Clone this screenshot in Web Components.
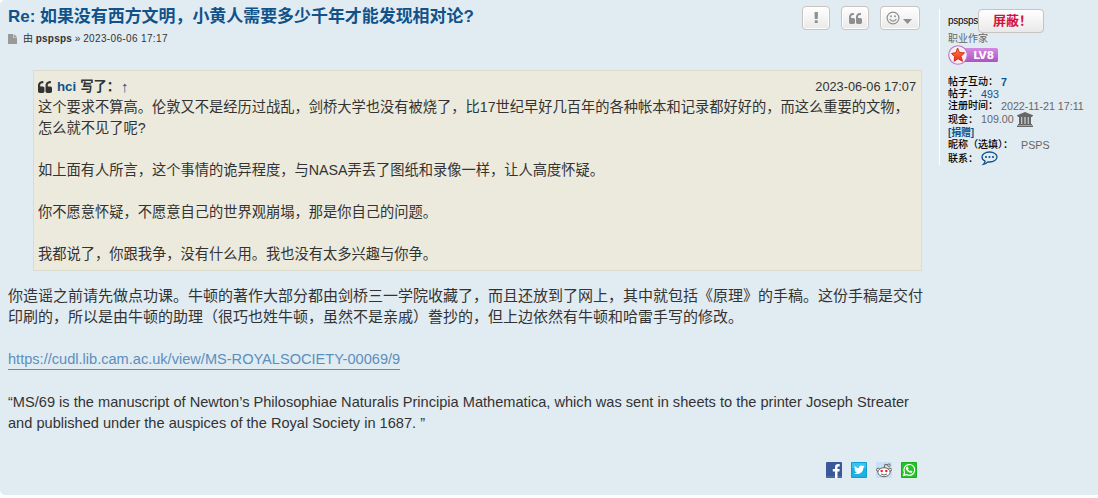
<!DOCTYPE html>
<html lang="zh-CN">
<head>
<meta charset="utf-8">
<title>如果没有西方文明</title>
<style>
  body {
    margin: 0; height: 498px; overflow: hidden; background: #fff; color: #333;
    font: 15px/21px "Liberation Sans", "Noto Sans CJK SC", sans-serif;
  }
  a { color: #105289; text-decoration: none; }
  p { margin: 0; }
</style>
</head>
<body>
<forum-post>
  <post-header slot="header" author="pspsps" time="2023-06-06 17:17">Re: 如果没有西方文明，小黄人需要多少千年才能发现相对论?</post-header>
  <quote-box author="hci" time="2023-06-06 17:07">
    <p>这个要求不算高。伦敦又不是经历过战乱，剑桥大学也没有被烧了，比17世纪早好几百年的各种帐本和记录都好好的，而这么重要的文物，<br>怎么就不见了呢?</p>
    <p>如上面有人所言，这个事情的诡异程度，与NASA弄丢了图纸和录像一样，让人高度怀疑。</p>
    <p>你不愿意怀疑，不愿意自己的世界观崩塌，那是你自己的问题。</p>
    <p>我都说了，你跟我争，没有什么用。我也没有太多兴趣与你争。</p>
  </quote-box>
  <post-text></post-text>
  <share-bar slot="share"></share-bar>
  <user-profile slot="profile"></user-profile>
</forum-post>

<script>
const ICONS = {
  quote: ['0 0 1664 1664', '<path d="M768 960v384q0 80-56 136t-136 56H192q-80 0-136-56T0 1344V640q0-104 40.500-198.500T150 278t163.500-109.500T512 128h64q26 0 45 19t19 45v128q0 26-19 45t-45 19h-64q-106 0-181 75t-75 181v32q0 40 28 68t68 28h224q80 0 136 56t56 136zm896 0v384q0 80-56 136t-136 56h-384q-80 0-136-56t-56-136V640q0-104 40.500-198.500T1046 278t163.500-109.500T1408 128h64q26 0 45 19t19 45v128q0 26-19 45t-45 19h-64q-106 0-181 75t-75 181v32q0 40 28 68t68 28h224q80 0 136 56t56 136z"/>'],
  alert: ['0 0 1792 1792', '<path d="M1120 1248v224q0 26-19 45t-45 19h-256q-26 0-45-19t-19-45v-224q0-26 19-45t45-19h256q26 0 45 19t19 45zm30-1056l-28 768q-1 26-20.500 45t-45.500 19h-256q-26 0-45.500-19t-20.500-45l-28-768q-1-26 17.500-45t44.500-19h320q26 0 44.500 19t17.500 45z"/>'],
  smile: ['0 0 14 14', '<g fill="none" stroke="currentColor" stroke-width="1.200"><circle cx="7" cy="7" r="5.900"/><path d="M4 8.300q3 3.600 6 0" stroke-linecap="round"/></g><circle cx="5" cy="5.200" r=".95"/><circle cx="9" cy="5.200" r=".95"/>'],
  caret: ['0 0 9 5', '<path d="M0 0h9L4.500 5z"/>'],
  file: ['0 0 9 10', '<path d="M.5 0H5v3.500h4v6q0 .5-.5.5h-8Q0 10 0 9.500v-9Q0 0 .5 0zM5.700 0 9 2.900H5.700z"/>'],
  bank: ['0 0 16 15', '<path d="M8 0l8 3.200v1H15v.8H1v-.8H0v-1zM2 5h2.300v7h.9V5h2.300v7h1V5h2.300v7h.9V5H14v7h1v1H1v-1h1zM0 13.500h16V15H0z"/>'],
  chat: ['0 0 17 15', '<path d="M8.500 1C4.300 1 1 3.200 1 6c0 1.800 1.200 3.200 3.100 4.100-.2 1.400-.8 2.400-1.700 3.300 2-.3 3.400-1.200 4.400-2.500l1.700.1c4.200 0 7.500-2.200 7.500-5S12.700 1 8.500 1z" fill="none" stroke="currentColor" stroke-width="1.300"/><circle cx="5" cy="6" r="1.050"/><circle cx="8.500" cy="6" r="1.050"/><circle cx="12" cy="6" r="1.050"/>'],
  facebook: ['0 0 16 16', '<rect width="16" height="16" rx="1" fill="#3b5998"/><path d="M0 14h16v1.500H0z" fill="#526ba5"/><path d="M9 16V9.500H6.800V7H9V5.200C9 2.900 10.300 2 12.100 2h1.600v2.400h-1.200c-.8 0-1 .4-1 1V7h2.200l-.3 2.500h-1.900V16z" fill="#fff"/>'],
  twitter: ['0 0 16 16', '<rect width="16" height="16" rx="1" fill="#0698cd"/><rect x=".7" y=".7" width="14.600" height="14.600" fill="#1cb0e4"/><path d="M1 1h14v5H1z" fill="#39c3ef"/><path d="M3 11.200c1.200.1 2.200-.2 3-.8-1-.1-1.700-.7-1.900-1.500h.9C4 8.600 3.400 7.800 3.400 6.700l.9.200C3.400 6.200 3.200 5 3.700 4c1.100 1.300 2.500 2 4.300 2.100-.3-1.600.8-2.700 2.200-2.700.7 0 1.200.3 1.600.7l1.400-.5-.9 1.200 1.200-.3-1.100 1.200c.1 4.500-4.900 8-9.400 5.500z" fill="#fff"/>'],
  reddit: ['0 0 16 16', '<rect width="16" height="16" fill="#c9dff5"/><g stroke="#555" stroke-width=".9"><path d="M8 6l1-3.800 3 .8" fill="none"/><circle cx="12.900" cy="3.200" r="1.250" fill="#fff"/><circle cx="2.200" cy="7.800" r="1.600" fill="#fff"/><circle cx="13.800" cy="7.800" r="1.600" fill="#fff"/><ellipse cx="8" cy="10.200" rx="6.100" ry="4.500" fill="#fff"/><path d="M5 12q3 2 6 0" fill="none"/></g><circle cx="5.700" cy="9" r="1.250" fill="#ee2b1b"/><circle cx="10.300" cy="9" r="1.250" fill="#ee2b1b"/>'],
  whatsapp: ['0 0 16 16', '<rect width="16" height="16" rx="1" fill="#18aa18"/><rect x=".7" y=".7" width="14.600" height="14.600" fill="#26c326"/><path d="M2.700 13.400l.8-3A5.400 5.400 0 1 1 5.600 12.600z" fill="none" stroke="#fff" stroke-width="1.200"/><path d="M5.800 4.800l1-.2.8 1.800-.6.8q.6 1.300 2 1.900l.8-.7 1.600.9c0 1.200-1 1.700-2 1.500-2.700-.5-4.500-2.500-4.600-4.500q.1-.9 1-1.500z" fill="#fff"/>'],
  level: ['0 0 50 20', '<defs><linearGradient id="p" x2="0" y2="1"><stop stop-color="#d38be0"/><stop offset="1" stop-color="#ae50c5"/></linearGradient><linearGradient id="s" x2="0" y2="1"><stop stop-color="#ff8852"/><stop offset="1" stop-color="#e92916"/></linearGradient></defs><rect x="12" y="3" width="38" height="14" rx="1.500" fill="url(#p)"/><circle cx="10" cy="10" r="9.300" fill="#f7edf3" stroke="#b579ca" stroke-width="1.100"/><path d="M9.500 3l2 4.600 5 .2-3.500 3.600 1.500 4.900-4.500-2.600-3.800 2.600.4-4.700L3.500 8.500l4.500-.9z" fill="url(#s)" stroke="#c9270e" stroke-width=".9"/>'],
};

function icon(name, width, height = width) {
  const [box, shapes] = ICONS[name];
  return `<svg class="${name}" width="${width}" height="${height}" viewBox="${box}" fill="currentColor" aria-hidden="true">${shapes}</svg>`;
}

class BaseElement extends HTMLElement {
  constructor() {
    super();
    this.attachShadow({ mode: 'open' });
  }
  connectedCallback() {
    this.shadowRoot.innerHTML = `<style>svg { display: block; flex: none; } a { color: #105289; text-decoration: none; }</style>${this.render()}`;
  }
}

customElements.define('forum-post', class extends BaseElement {
  render() {
    return `
      <style>
        :host { display: flex; box-sizing: border-box; height: 495px; padding: 6px 8px 17px; background: #e1ebf2; border-radius: 5px 0 0 5px; }
        main { display: flex; flex-direction: column; width: 914px; flex: none; }
        .share { margin-top: auto; align-self: flex-end; }
        aside { margin: 3px 0 0 17px; height: 156px; padding-left: 8px; border-left: 1px solid #fff; }
      </style>
      <main>
        <slot name="header"></slot>
        <slot></slot>
        <div class="share"><slot name="share"></slot></div>
      </main>
      <aside><slot name="profile"></slot></aside>`;
  }
});

customElements.define('tool-button', class extends BaseElement {
  render() {
    const name = this.getAttribute('icon');
    const size = name === 'quote' ? 13 : 14;
    return `
      <style>
        :host { display: flex; align-items: center; justify-content: center; gap: 3px; box-sizing: border-box; width: 28px; height: 24px; border: 1px solid #c7c3bf; border-radius: 4px; background: linear-gradient(#fff, #e9e9e9); box-shadow: inset 0 0 0 1px #fff; color: #8f8f8f; }
        :host([menu]) { width: 40px; padding-right: 3px; }
        .caret { margin-top: 6px; }
      </style>
      ${icon(name, size)}${this.hasAttribute('menu') ? icon('caret', 9, 5) : ''}`;
  }
});

customElements.define('post-header', class extends BaseElement {
  render() {
    return `
      <style>
        :host { display: block; height: 64px; }
        .top { display: flex; justify-content: space-between; height: 24px; }
        h3 { margin: 0; font-size: 16.950px; line-height: 21px; color: #105289; }
        .tools { display: flex; gap: 11px; margin-right: 2px; }
        .byline { display: flex; align-items: center; gap: 6px; margin-top: 2px; font-size: 10px; line-height: 14px; color: #333; }
        .file { color: #999; }
        b { letter-spacing: .2px; }
        .time { letter-spacing: .36px; }
      </style>
      <div class="top">
        <h3><slot></slot></h3>
        <div class="tools"><tool-button icon="alert"></tool-button><tool-button icon="quote"></tool-button><tool-button icon="smile" menu></tool-button></div>
      </div>
      <div class="byline">${icon('file', 9, 10)}<span>由 <b>${this.getAttribute('author')}</b> » <span class="time">${this.getAttribute('time')}</span></span></div>`;
  }
});

customElements.define('quote-box', class extends BaseElement {
  render() {
    return `
      <style>
        :host { display: block; box-sizing: border-box; height: 201px; margin: 0 0 0 25px; padding: 5px 4px; width: 889px; border: 1px solid #dbdbce; background: #ebeadd; font-size: 14.250px; white-space: nowrap; }
        header { display: flex; align-items: center; }
        cite { display: flex; gap: 4px; font-style: normal; font-weight: bold; font-size: 13.300px; }
        .quote { margin-right: 5px; }
        .arrow { font-weight: normal; margin-left: -3px; font-size: 15px; }
        time { margin-left: auto; margin-right: 1px; font-size: 12.750px; }
        ::slotted(p:not(:last-child)) { margin-bottom: 21px !important; }
      </style>
      <header>${icon('quote', 14)}<cite><a href="#">${this.getAttribute('author')}</a><span>写了：</span><a class="arrow" href="#">↑</a></cite><time>${this.getAttribute('time')}</time></header>
      <slot></slot>`;
  }
});

customElements.define('post-text', class extends BaseElement {
  render() {
    return `
      <style>
        :host { display: block; margin-top: 14px; white-space: nowrap; font-size: 15px; }
        p { margin: 0 0 21px; }
        .link { color: #5c8fbd; border-bottom: 1px solid #5c8fbd; padding-bottom: 2px; font-size: 14.580px; }
        .en { margin-top: 22px; font-size: 14.600px; }
      </style>
      <p>你造谣之前请先做点功课。牛顿的著作大部分都由剑桥三一学院收藏了，而且还放到了网上，其中就包括《原理》的手稿。这份手稿是交付<br>印刷的，所以是由牛顿的助理（很巧也姓牛顿，虽然不是亲戚）誊抄的，但上边依然有牛顿和哈雷手写的修改。</p>
      <p><a class="link" href="#">https://cudl.lib.cam.ac.uk/view/MS-ROYALSOCIETY-00069/9</a></p>
      <p class="en">“MS/69 is the manuscript of Newton’s Philosophiae Naturalis Principia Mathematica, which was sent in sheets to the printer Joseph Streater<br>and published under the auspices of the Royal Society in 1687. ”</p>`;
  }
});

customElements.define('share-bar', class extends BaseElement {
  render() {
    return `
      <style>:host { display: flex; gap: 9px; margin-right: 5px; }</style>
      ${['facebook', 'twitter', 'reddit', 'whatsapp'].map(name => icon(name, 16)).join('')}`;
  }
});

customElements.define('level-badge', class extends BaseElement {
  render() {
    return `
      <style>
        :host { display: grid; width: 50px; height: 20px; }
        svg, span { grid-area: 1 / 1; }
        span { align-self: center; justify-self: end; margin-right: 4px; color: #fff; font: bold 10.500px/14px "DejaVu Sans", sans-serif; }
      </style>
      ${icon('level', 50, 20)}<span>LV8</span>`;
  }
});

customElements.define('user-profile', class extends BaseElement {
  render() {
    return `
      <style>
        :host { display: block; width: 150px; font-size: 10px; line-height: 12px; color: #000; white-space: nowrap; }
        .name { display: flex; align-items: center; height: 24px; }
        .name span { letter-spacing: -.3px; width: 30px; }
        button { box-sizing: border-box; width: 66px; height: 24px; padding: 0 0 0 3px; border: 1px solid #c7c3bf; border-radius: 4px; background: linear-gradient(#fff, #e9e9e9); color: #d31141; font: bold 13px/20px "Liberation Sans", "Noto Sans CJK SC", sans-serif; }
        .rank { color: #666; height: 12px; }
        dl { margin: 11px 0 0; }
        dl div { display: flex; align-items: center; gap: 3px; height: 12px; }
        dl .cash { height: 15px; } dl .contact { height: 16px; } dl .nick { gap: 8px; }
        dt { font-weight: 500; }
        dd { display: flex; align-items: center; gap: 3px; margin: 0 0 1px; color: #666; font-size: 10.700px; }
        .chat { color: #105289; } .donate { font-weight: bold; letter-spacing: -.2px; }
      </style>
      <div class="name"><span>pspsps</span><button>屏蔽！</button></div>
      <div class="rank">职业作家</div>
      <level-badge></level-badge>
      <dl>
        <div><dt>帖子互动：</dt><dd><a href="#"><b>7</b></a></dd></div>
        <div><dt>帖子：</dt><dd><a href="#">493</a></dd></div>
        <div><dt>注册时间：</dt><dd>2022-11-21 17:11</dd></div>
        <div class="cash"><dt>现金：</dt><dd>109.00 ${icon('bank', 16, 15)}</dd></div>
        <div><a class="donate" href="#">[捐赠]</a></div>
        <div class="nick"><dt>昵称（选填）：</dt><dd>PSPS</dd></div>
        <div class="contact"><dt>联系：</dt><dd>${icon('chat', 17, 15)}</dd></div>
      </dl>`;
  }
});
</script>
</body>
</html>
